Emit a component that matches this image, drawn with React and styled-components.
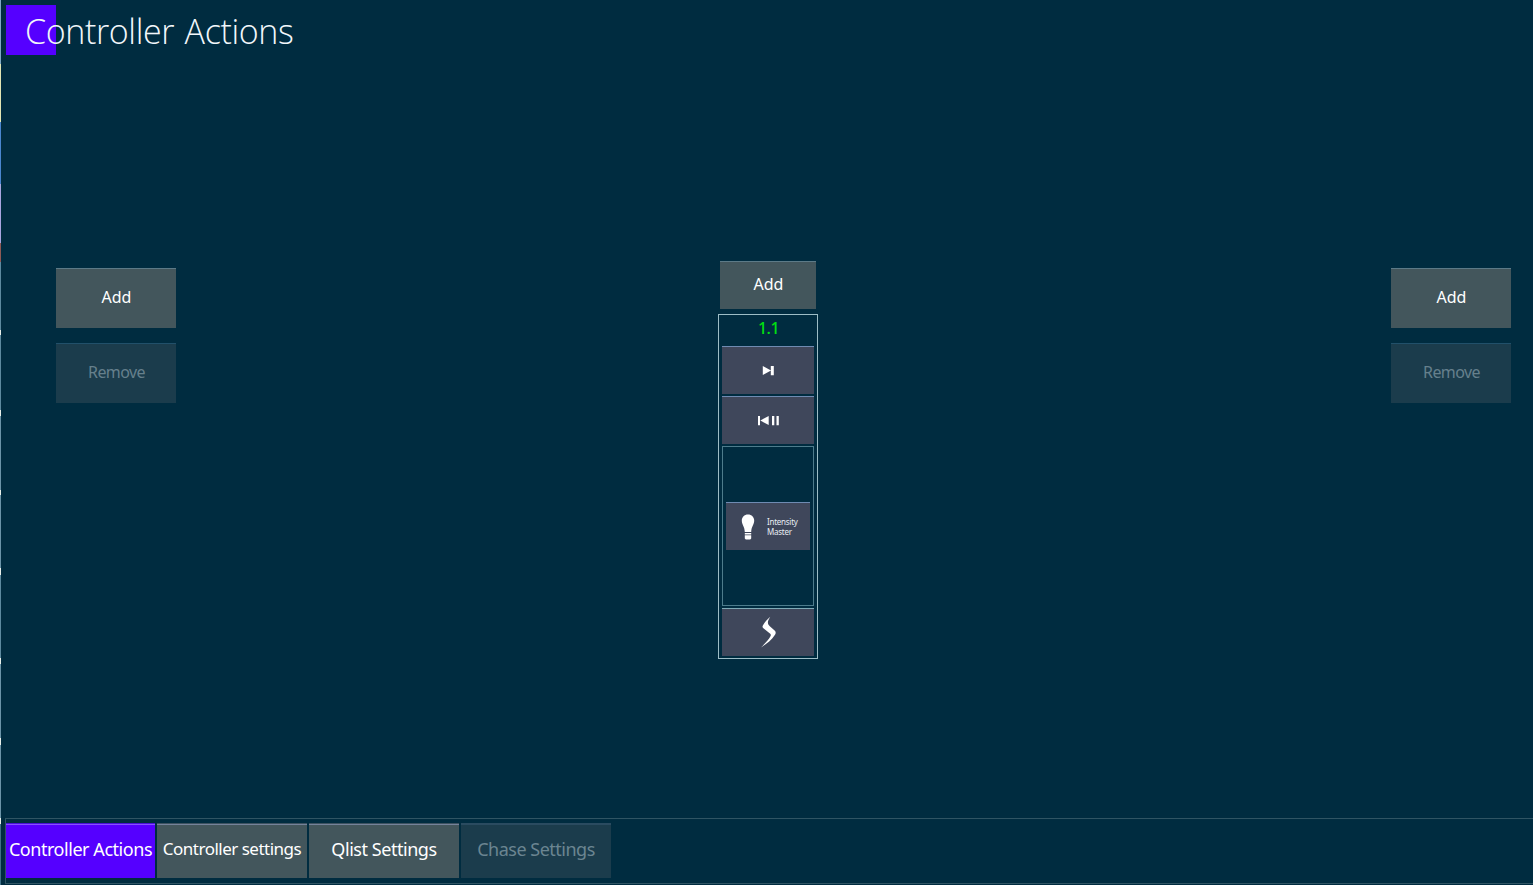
import React from "react";
import styled, { createGlobalStyle, css } from "styled-components";

const Global = createGlobalStyle`
  * { box-sizing: border-box; }
  body {
    margin: 0;
    background: #002c40;
    color: #fff;
    font-family: "Noto Sans", "Open Sans", sans-serif;
    overflow: hidden;
  }
  button { font: inherit; color: inherit; border: 0; padding: 0; margin: 0; }
`;

const Screen = styled.div`
  width: 1533px;
  height: 885px;
  display: flex;
`;

const Edge = styled.div`
  flex: none;
  width: 1px;
  background: linear-gradient(
    #7fa9c4 0 64px, #e2e6b4 64px 122px, #4a86cf 122px 184px, #a9a6e0 184px 243px,
    #8f5a55 243px 262px, #5d8a9f 262px 330px, #e8efe9 330px 335px, #5d8a9f 335px 410px,
    #e8efe9 410px 416px, #6b94a8 416px 490px, #e8efe9 490px 495px, #6b94a8 495px 568px,
    #e8efe9 568px 575px, #5d8a9f 575px 658px, #e8efe9 658px 664px, #6b94a8 664px 738px,
    #e8efe9 738px 745px, #6b94a8 745px 818px, #e8efe9 818px 824px, #3f7086 824px
  );
`;

const Page = styled.div`
  flex: 1;
  min-width: 0;
  display: flex;
  flex-direction: column;
`;

const Header = styled.header`
  height: 64px;
  padding: 5px 0 0 5px;
`;

const TitleMark = styled.div`
  width: 50px;
  height: 50px;
  background: #5500ff;
`;

const Title = styled.h1`
  margin: 0;
  padding-left: 19px;
  font: 300 34px/53px "Open Sans", sans-serif;
  letter-spacing: ${(p) => p.$tracking}px;
  word-spacing: 2px;
  white-space: nowrap;
  color: #f2f7fb;
`;

const Main = styled.main`
  flex: 1;
  display: flex;
  justify-content: space-between;
  align-items: flex-start;
  padding: 197px 22px 0 55px;
`;

const SideActions = styled.div`
  display: flex;
  flex-direction: column;
  gap: 15px;
  padding-top: 7px;
`;

const Caption = styled.span`
  display: block;
  white-space: nowrap;
  font-size: ${(p) => p.$size || 16}px;
  line-height: 20px;
  letter-spacing: ${(p) => p.$tracking || 0}px;
`;

const ActionButton = styled.button`
  display: flex;
  justify-content: center;
  align-items: center;
  width: ${(p) => (p.$compact ? 96 : 120)}px;
  height: ${(p) => (p.$compact ? 48 : 60)}px;
  padding: 0 0 4px 1px;
  background: #43565c;
  border-top: 1px solid #5c7a87;
  &:disabled {
    background: #1b3c4c;
    border-top-color: #21506a;
    color: #66808c;
  }
`;

const Controller = styled.section`
  display: flex;
  flex-direction: column;
  align-items: center;
  gap: 5px;
  margin-right: 31px;
`;

const Strip = styled.div`
  display: flex;
  flex-direction: column;
  gap: 2px;
  width: 100px;
  height: 345px;
  padding: 0 3px;
  border: 1px solid #9dbdc6;
`;

const StripNumber = styled.div`
  height: 29px;
  padding: 3px 0 0 1px;
  text-align: center;
  font-weight: 500;
  color: #00e010;
`;

const StripButton = styled.button`
  display: flex;
  justify-content: center;
  align-items: center;
  flex: none;
  width: 100%;
  height: 48px;
  padding-bottom: 1px;
  background: #3f475b;
  border-top: 1px solid ${(p) => p.$line || "#6f8bb2"};
`;

const Fader = styled.div`
  flex: none;
  display: flex;
  align-items: center;
  height: 160px;
  padding: 0 3px;
  border: 1px solid #4e7c8c;
`;

const FaderButton = styled(StripButton)`
  justify-content: flex-start;
  padding: 0 0 0 15px;
  gap: 12px;
`;

const FaderLabel = styled.span`
  text-align: left;
  font-size: 8px;
  line-height: 10px;
  letter-spacing: ${(p) => p.$tracking || 0}px;
  color: #e8edf4;
`;

const TabBar = styled.nav`
  display: flex;
  gap: 2px;
  height: 66px;
  margin: 0 0 1px 4px;
  padding: 4px 0 0;
  border: solid #2f5463;
  border-width: 1px 0 1px 1px;
`;

const Tab = styled.button`
  display: flex;
  justify-content: center;
  align-items: center;
  width: ${(p) => (p.$active ? 149 : 150)}px;
  height: 55px;
  padding-bottom: 3px;
  background: ${(p) => (p.$active ? "#5500ff" : "#43565c")};
  box-shadow: inset 0 1px 0 ${(p) => (p.$active ? "#4b12d8" : "#3d5260")},
    inset 0 3px 0 -1px ${(p) => (p.$active ? "#8650ff" : "#75829a")};
  ${(p) =>
    p.disabled &&
    css`
      background: #1b3c4c;
      color: #6b8591;
      box-shadow: inset 0 2px 0 #2a4b60;
    `}
`;

const NextIcon = () => (
  <svg width="14" height="12" viewBox="0 0 14 12" fill="#fff">
    <path d="M1.800 2 10 6.500 1.800 11zM9.800 2h3v9.200h-3z" />
  </svg>
);

const BackPauseIcon = () => (
  <svg width="24" height="12" viewBox="0 0 24 12" fill="#fff">
    <path d="M2 2h2v9.200H2zM12.700 2v9L4.300 6.500zM16 2h2.300v9.200H16zM20.500 2h2.300v9.200h-2.300z" />
  </svg>
);

const BulbIcon = () => (
  <svg width="14" height="26" viewBox="0 0 14 26" fill="#fff">
    <path d="M7 .5C3.300.5.8 3.200.8 6.600c0 4.200 2.800 5.800 3 11.400h6.400c.2-5.600 3-7.200 3-11.400C13.200 3.200 10.700.5 7 .5z" />
    <path d="M3.800 18.900h6.400v1.500H3.800zM3.800 21.200h6.400v3.200l-1 1H4.800l-1-1z" />
  </svg>
);

const FlashIcon = () => (
  <svg width="18" height="32" viewBox="0 0 18 32" fill="#fff">
    <path d="M11.300.7C8.400 5.200 8 7.600 10.800 10.200L15.600 14.600C17 16 17 17.200 16 18.800 12.900 23.800 7 28.500 2 31.400 6.500 27 9.800 23.300 11.200 20.800 12.300 18.900 11.900 18.300 10.300 17L4.400 12.300C3.300 11.400 3.300 10.400 4 9.300 5.700 6.300 8.300 3.200 11.300.7z" />
  </svg>
);

const SidePanel = () => (
  <SideActions>
    <ActionButton><Caption>Add</Caption></ActionButton>
    <ActionButton disabled><Caption $tracking={-0.6}>Remove</Caption></ActionButton>
  </SideActions>
);

const tabs = [
  { label: "Controller Actions", active: true, size: 18, tracking: -0.45 },
  { label: "Controller settings", size: 17, tracking: -0.5 },
  { label: "Qlist Settings", size: 18, tracking: -0.45 },
  { label: "Chase Settings", size: 18, disabled: true, tracking: -0.5 },
];

export default function App() {
  return (
    <>
      <Global />
      <Screen>
        <Edge />
        <Page>
          <Header>
            <TitleMark>
              <Title $tracking={-0.38}>Controller Actions</Title>
            </TitleMark>
          </Header>
          <Main>
            <SidePanel />
            <Controller>
              <ActionButton $compact><Caption>Add</Caption></ActionButton>
              <Strip>
                <StripNumber><Caption $tracking={-0.5}>1.1</Caption></StripNumber>
                <StripButton><NextIcon /></StripButton>
                <StripButton><BackPauseIcon /></StripButton>
                <Fader>
                  <FaderButton>
                    <BulbIcon />
                    <FaderLabel $tracking={-0.25}>Intensity<br />Master</FaderLabel>
                  </FaderButton>
                </Fader>
                <StripButton $line="#7fa9b5"><FlashIcon /></StripButton>
              </Strip>
            </Controller>
            <SidePanel />
          </Main>
          <TabBar>
            {tabs.map((tab) => (
              <Tab key={tab.label} $active={tab.active} disabled={tab.disabled}>
                <Caption $size={tab.size} $tracking={tab.tracking}>{tab.label}</Caption>
              </Tab>
            ))}
          </TabBar>
        </Page>
      </Screen>
    </>
  );
}
